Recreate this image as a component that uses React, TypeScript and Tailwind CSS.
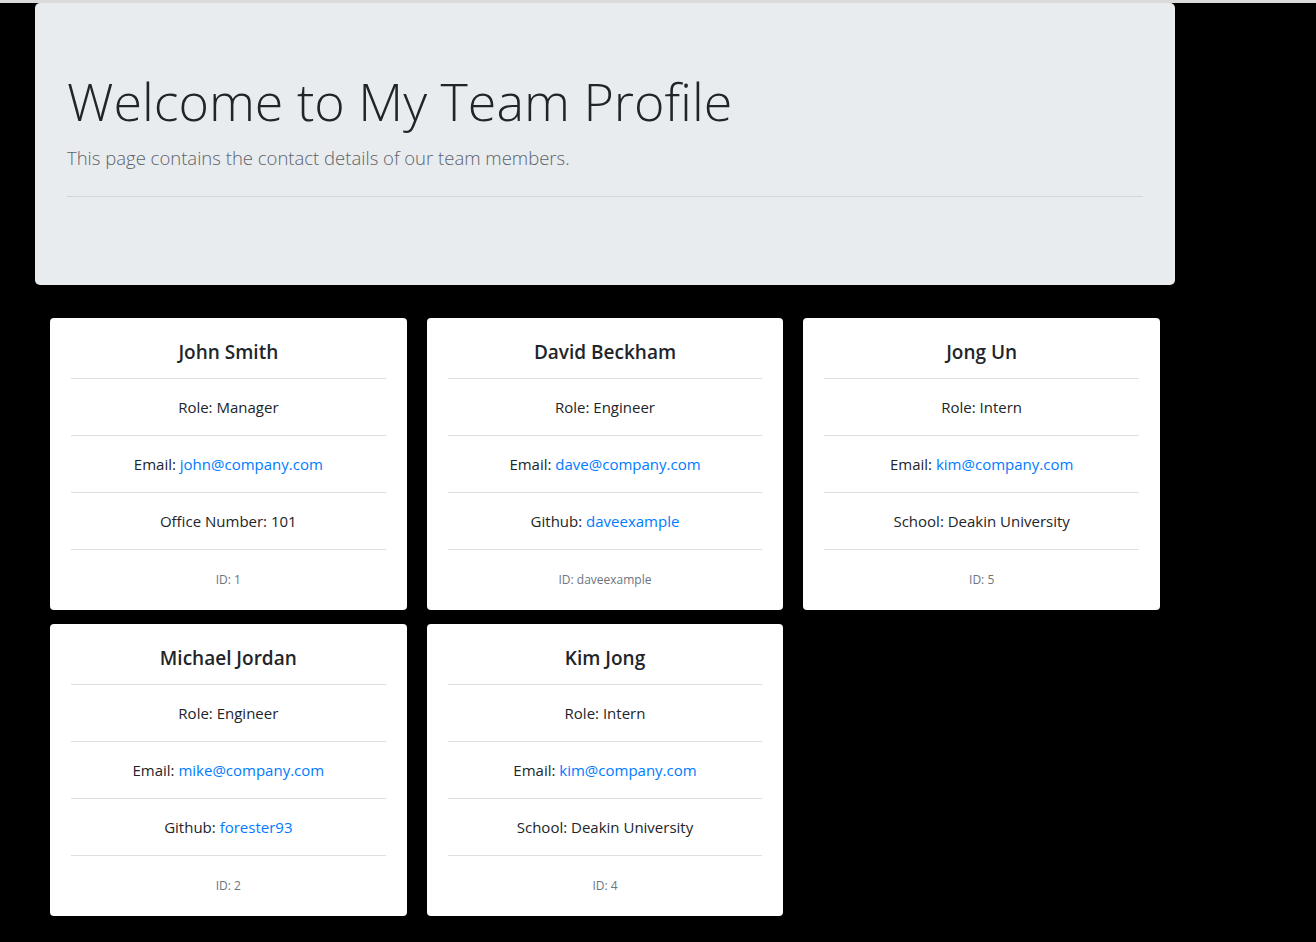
import React from 'react';

type Member = {
  name: string;
  role: string;
  email: string;
  extraLabel: string;
  extraValue: string;
  extraLink?: boolean;
  id: string;
};

const members: Member[] = [
  { name: 'John Smith', role: 'Manager', email: 'john@company.com', extraLabel: 'Office Number', extraValue: '101', id: '1' },
  { name: 'David Beckham', role: 'Engineer', email: 'dave@company.com', extraLabel: 'Github', extraValue: 'daveexample', extraLink: true, id: 'daveexample' },
  { name: 'Jong Un', role: 'Intern', email: 'kim@company.com', extraLabel: 'School', extraValue: 'Deakin University', id: '5' },
  { name: 'Michael Jordan', role: 'Engineer', email: 'mike@company.com', extraLabel: 'Github', extraValue: 'forester93', extraLink: true, id: '2' },
  { name: 'Kim Jong', role: 'Intern', email: 'kim@company.com', extraLabel: 'School', extraValue: 'Deakin University', id: '4' },
];

const MemberCard: React.FC<{ m: Member }> = ({ m }) => (
  <div className="bg-white rounded-[4px] px-[21px] text-center text-[#212529] h-[292px] flex flex-col">
    <h5 className="h-[61px] flex items-center justify-center text-[19px] font-semibold border-b border-[#dfdfdf] pt-[8px]">
      {m.name}
    </h5>
    <div className="h-[57px] flex items-center justify-center text-[15px] border-b border-[#dfdfdf]">
      Role: {m.role}
    </div>
    <div className="h-[57px] flex items-center justify-center text-[15px] border-b border-[#dfdfdf]">
      Email:&nbsp;<a className="text-[#007bff]">{m.email}</a>
    </div>
    <div className="h-[57px] flex items-center justify-center text-[15px] border-b border-[#dfdfdf]">
      {m.extraLabel}:&nbsp;
      {m.extraLink ? <a className="text-[#007bff]">{m.extraValue}</a> : m.extraValue}
    </div>
    <div className="flex-1 flex items-center justify-center text-[12px] text-[#6c757d]">
      ID: {m.id}
    </div>
  </div>
);

export default function App() {
  return (
    <div className="min-h-[942px] bg-black font-['Open_Sans',sans-serif]">
      <div className="h-[3px] bg-[#dadada]" />
      <div className="ml-[35px] w-[1140px] h-[282px] bg-[#e9ecef] rounded-[5px] px-[32px] pt-[67px]">
        <h1 className="text-[52px] font-light leading-[1.2] text-[#212529]">Welcome to My Team Profile</h1>
        <p className="text-[18.5px] font-light text-[#5c636a] mt-[12px]">This page contains the contact details of our team members.</p>
        <hr className="mt-[24px] border-t border-[#d3d6d9]" />
      </div>
      <div className="ml-[50px] mt-[33px] w-[1110px] grid grid-cols-3 gap-x-[20px] gap-y-[14px]">
        {members.map((m, i) => (
          <MemberCard key={i} m={m} />
        ))}
      </div>
    </div>
  );
}
